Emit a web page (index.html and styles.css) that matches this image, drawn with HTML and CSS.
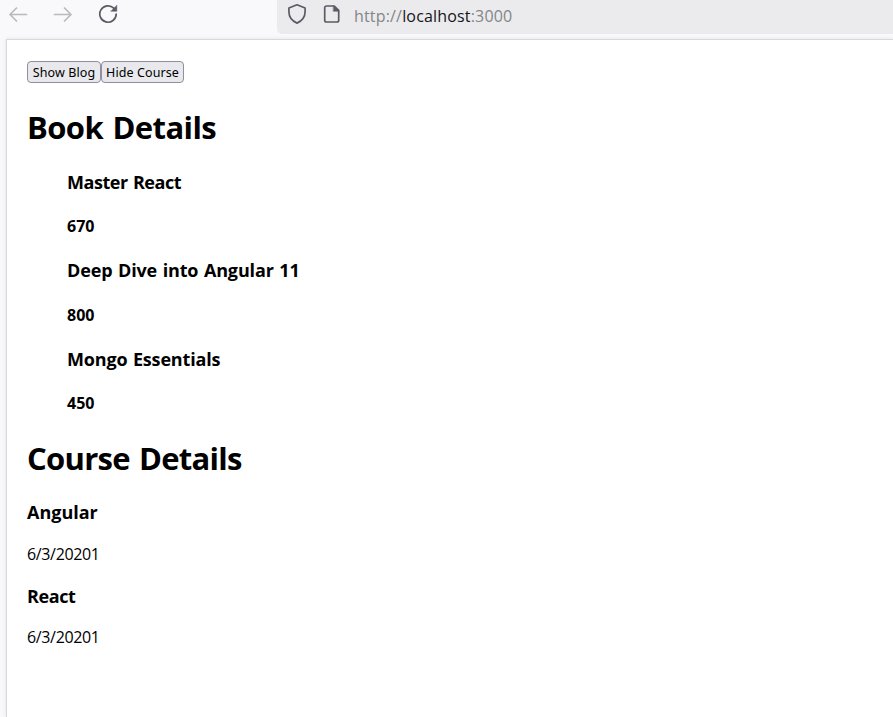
FILE: index.html
```html
<!DOCTYPE html>
<html lang="en">
<head>
<meta charset="utf-8">
<title>Book Details</title>
<link rel="stylesheet" href="styles.css">
</head>
<body>
<header class="toolbar">
  <nav class="nav">
    <svg class="icon muted" width="20" height="20" viewBox="0 0 20 20"><path d="M18.5 10.500H2M8.500 4 2 10.500l6.500 6.500"/></svg>
    <svg class="icon muted" width="20" height="20" viewBox="0 0 20 20"><path d="M1.500 10.500H18M11.500 4l6.500 6.500-6.500 6.500"/></svg>
    <svg class="icon" width="20" height="20" viewBox="0 0 20 20"><path d="M15.800 4.200A8.200 8.200 0 1 0 18.200 10"/><path class="solid" d="M18.800 1.500v5.800h-5.800z"/></svg>
  </nav>
  <div class="address">
    <svg class="icon" width="20" height="22" viewBox="0 0 20 22"><path d="M10 1.800 18.100 5v3.500c0 5.500-3.300 9.500-8.100 11.600C5.200 18 1.900 14 1.900 8.500V5z"/></svg>
    <svg class="icon page-icon" width="18" height="20" viewBox="0 0 18 20"><path d="M3.500 2h7.800l4.400 4.400v9.800a1.800 1.800 0 0 1-1.800 1.800H3.500a1.800 1.800 0 0 1-1.800-1.800V3.800A1.800 1.800 0 0 1 3.500 2z"/><path class="solid" d="M10.500 1.800 16 7.300h-5.500z"/></svg>
    <span class="url">http://<span class="host">localhost</span>:3000</span>
  </div>
</header>
<main class="page">
  <div class="actions"><button class="btn show">Show Blog</button><button class="btn hide">Hide Course</button></div>
  <h1 class="book-title">Book Details</h1>
  <ul class="books">
    <li><h3 class="master">Master React</h3><h4>670</h4></li>
    <li><h3 class="deep">Deep Dive into Angular 11</h3><h4>800</h4></li>
    <li><h3 class="mongo">Mongo Essentials</h3><h4>450</h4></li>
  </ul>
  <h1 class="course-title">Course Details</h1>
  <h3 class="angular">Angular</h3>
  <p>6/3/20201</p>
  <h3 class="react">React</h3>
  <p>6/3/20201</p>
</main>
</body>
</html>
```
FILE: styles.css
```css
* { box-sizing: border-box; }
body {
  margin: 0;
  height: 717px;
  overflow: hidden;
  display: flex;
  flex-direction: column;
  background: #f9f9fb;
  color: #000;
  font: 16px/21px "Open Sans", "Noto Sans", sans-serif;
}
.toolbar { display: flex; height: 39px; flex: none; }
.nav { display: flex; width: 277px; padding: 4px 0 0 8px; gap: 25px; }
.icon { flex: none; fill: none; stroke: #5b5b66; stroke-width: 1.7; stroke-linecap: round; stroke-linejoin: round; }
.icon.muted { stroke: #b9b9c0; }
.icon .solid { fill: #5b5b66; stroke-width: .5; }
.address {
  display: flex;
  flex: 1;
  height: 34px;
  padding: 3px 0 0 10px;
  background: #ebebed;
  border-bottom-left-radius: 5px;
}
.page-icon { margin: 1px 0 0 16px; }
.url { margin-left: 13px; padding-top: 2px; font-size: 16px; line-height: 22px; letter-spacing: .17px; color: #858588; white-space: nowrap; }
.host { color: #15141a; }
.page {
  flex: 1;
  margin-left: 6px;
  padding: 21px 20px;
  background: #fff;
  border-top: 1px solid #d9d9db;
  border-left: 1px solid #d9d9db;
  box-shadow: 0 0 4px #e4e4e8;
}
.actions { display: flex; height: 22px; }
.btn {
  height: 22px;
  padding: 1px 0 0;
  border: 1px solid #8f8f9d;
  border-radius: 4px;
  background: #e9e9ed;
  color: #000;
  font: 400 12.5px/20px "Noto Sans", sans-serif;
  letter-spacing: .1px;
  white-space: nowrap;
}
.show { width: 74px; }
.hide { width: 83px; }
h1 { height: 43px; margin: 21.44px 0; padding-top: 2px; font-size: 31px; line-height: 43px; word-spacing: 2px; }
h3 { height: 25px; margin: 18.72px 0; padding-top: 1px; font-size: 18px; line-height: 25px; word-spacing: 1px; }
h4 { height: 21px; margin: 21.28px 0; padding-top: 1px; font-size: 16px; line-height: 21px; }
p { height: 21px; margin: 18.72px 0; padding-top: 1px; letter-spacing: -.35px; }
.books { margin: 0; padding: 0 0 0 40px; list-style: none; }
.book-title { letter-spacing: -.6px; }
.course-title { letter-spacing: -.73px; }
.master { letter-spacing: -.45px; }
.deep { letter-spacing: -.14px; }
.mongo { letter-spacing: -.17px; }
.react { letter-spacing: -.4px; }
```
